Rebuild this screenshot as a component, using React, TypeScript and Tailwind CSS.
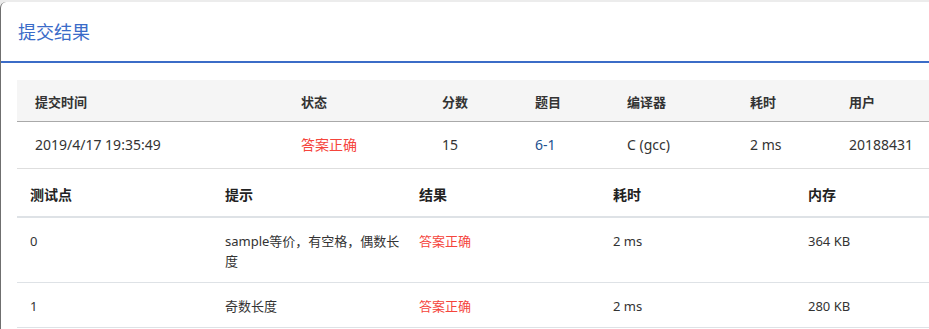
const font = { fontFamily: '"Noto Sans", "Noto Sans CJK SC", sans-serif' };

const summaryHead = ["提交时间", "状态", "分数", "题目", "编译器", "耗时", "用户"];

const cases = [
  { id: "0", hint: "sample等价，有空格，偶数长度", time: "2 ms", mem: "364 KB" },
  { id: "1", hint: "奇数长度", time: "2 ms", mem: "280 KB" },
];

const grid1 = "grid grid-cols-[266px_141px_93px_92px_123px_99px_1fr]";
const grid2 = "grid grid-cols-[195px_194px_194px_195px_1fr]";

export default function App() {
  return (
    <div className="h-[329px] w-[929px] overflow-hidden bg-[#ececec] pt-[2px]" style={font}>
      <div className="h-full rounded-tl-[6px] border-l border-[#6f6f6f] bg-white">
        <div className="h-[61px] border-b-2 border-[#3b6cc7] pl-[17px] pt-[18px]">
          <h3 className="text-[18px] leading-[24px] text-[#3a6bc8]">提交结果</h3>
        </div>

        <div className="pl-[16px] pt-[17px]">
          {/* summary */}
          <div className={`${grid1} w-[960px] border-b border-[#a9a9a9] bg-[#f5f5f5]`}>
            {summaryHead.map((h) => (
              <div key={h} className="pl-[18px] pt-[12px] pb-[9px] text-[13px] font-bold leading-[20px] text-[#333]">
                {h}
              </div>
            ))}
          </div>
          <div className={`${grid1} w-[960px] border-b border-[#dedede] text-[14px] leading-[20px] text-[#333]`}>
            <div className="pl-[18px] py-[13px]">2019/4/17 19:35:49</div>
            <div className="pl-[18px] py-[13px] text-[#f5453c]">答案正确</div>
            <div className="pl-[18px] py-[13px]">15</div>
            <div className="pl-[18px] py-[13px]">
              <a href="#" className="text-[#22518f]">6-1</a>
            </div>
            <div className="pl-[18px] py-[13px]">C (gcc)</div>
            <div className="pl-[18px] py-[13px]">2 ms</div>
            <div className="pl-[18px] py-[13px]">20188431</div>
          </div>

          {/* test cases */}
          <div className={`${grid2} w-[980px] border-b-2 border-[#dee2e6] text-[14px] font-bold leading-[20px] text-[#222]`}>
            {["测试点", "提示", "结果", "耗时", "内存"].map((h) => (
              <div key={h} className="pl-[13px] pt-[16px] pb-[11px]">
                {h}
              </div>
            ))}
          </div>
          {cases.map((c) => (
            <div
              key={c.id}
              className={`${grid2} w-[980px] border-b border-[#dee2e6] text-[13px] leading-[20px] text-[#333]`}
            >
              <div className="pl-[13px] pr-[4px] pt-[13px] pb-[11px]">{c.id}</div>
              <div className="pl-[13px] pr-[4px] pt-[13px] pb-[11px]">{c.hint}</div>
              <div className="pl-[13px] pr-[4px] pt-[13px] pb-[11px] text-[#f5453c]">答案正确</div>
              <div className="pl-[13px] pr-[4px] pt-[13px] pb-[11px]">{c.time}</div>
              <div className="pl-[13px] pr-[4px] pt-[13px] pb-[11px]">{c.mem}</div>
            </div>
          ))}
        </div>
      </div>
    </div>
  );
}
